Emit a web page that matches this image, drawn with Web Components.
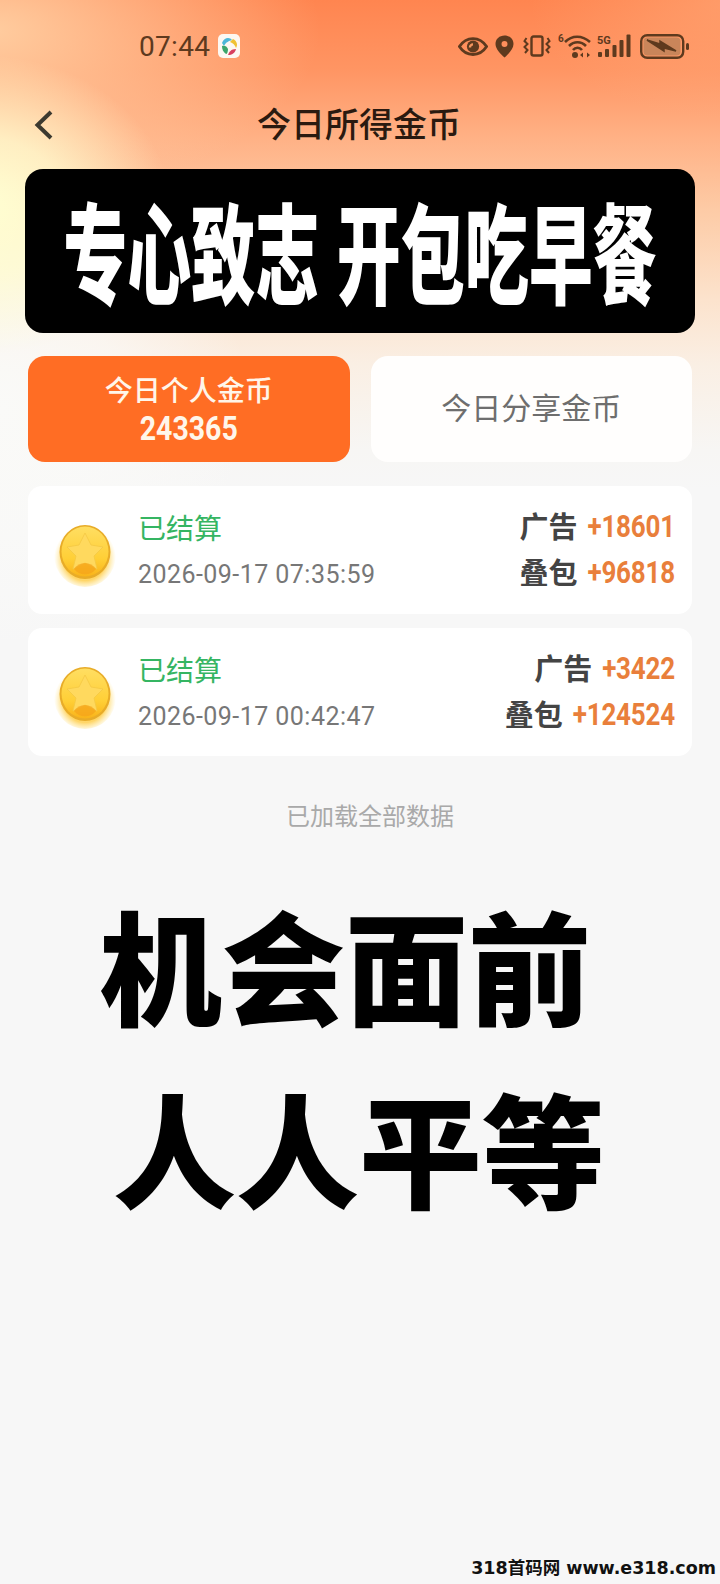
<!DOCTYPE html>
<html lang="zh">
<head>
<meta charset="utf-8">
<title>今日所得金币</title>
<style>
    html, body {
        margin: 0;
        padding: 0;
        background: #f7f7f7;
    }
</style>
</head>
<body>

<app-page>
    <status-bar time="07:44"></status-bar>
    <nav-bar>今日所得金币</nav-bar>
    <promo-banner>专心致志 开包吃早餐</promo-banner>

    <tab-row>
        <tab-item active>今日个人金币<span slot="value">243365</span></tab-item>
        <tab-item>今日分享金币</tab-item>
    </tab-row>

    <settle-card status="已结算" time="2026-09-17 07:35:59" ad="+18601" pack="+96818"></settle-card>
    <settle-card status="已结算" time="2026-09-17 00:42:47" ad="+3422" pack="+124524"></settle-card>

    <end-note>已加载全部数据</end-note>

    <big-slogan>
        <span>机会面前</span>
        <span class="second">人人平等</span>
    </big-slogan>

    <water-mark>318首码网 www.e318.com</water-mark>
</app-page>

<script>
const CJK = `"Noto Sans CJK SC", "Noto Sans", sans-serif`;
const NUM = `Roboto, "Noto Sans CJK SC", sans-serif`;

class AppPage extends HTMLElement {
    connectedCallback() {
        const shadow = this.attachShadow({ mode: "open" });

        shadow.innerHTML = `
        <style>
            :host {
                display: flex;
                flex-direction: column;
                width: 720px;
                height: 1584px;
                overflow: hidden;
                font-family: ${CJK};
                background:
                    radial-gradient(ellipse 190px 150px at -20px 205px, #ffffd2 0%, rgba(255,255,210,.75) 45%, rgba(255,255,210,0) 100%),
                    radial-gradient(ellipse 330px 170px at -10px 30px, rgba(255,216,172,.85) 0%, rgba(255,212,170,.45) 50%, rgba(255,212,170,0) 100%),
                    radial-gradient(ellipse 250px 240px at 0 410px, rgba(250,250,248,1) 0%, rgba(250,250,248,.7) 50%, rgba(250,250,248,0) 100%),
                    radial-gradient(ellipse 200px 120px at 730px 0, rgba(255,178,130,.5) 0%, rgba(255,178,130,0) 100%),
                    linear-gradient(180deg, #ff8550 0, #ff9563 70px, #ffb084 135px, #fdcba6 210px, #fce3cd 300px, #faefe4 365px, #f7f6f4 450px, #f7f7f7 490px);
            }
        </style>
        <slot></slot>`;
    }
}

customElements.define("app-page", AppPage);

class StatusBar extends HTMLElement {
    connectedCallback() {
        const shadow = this.attachShadow({ mode: "open" });

        shadow.innerHTML = `
        <style>
            :host {
                display: flex;
                align-items: center;
                height: 92px;
                padding: 0 31px 0 139px;
                box-sizing: border-box;
                color: #5e3a1e;
            }
            .time {
                font: 400 28px/1 ${NUM};
                letter-spacing: .3px;
                margin-top: 2px;
            }
            .app {
                margin-left: 8px;
            }
            .icons {
                display: flex;
                align-items: center;
                margin-left: auto;
            }
            svg {
                display: block;
            }
        </style>

        <span class="time">${this.getAttribute("time")}</span>

        <svg class="app" width="22" height="24" viewBox="0 0 22 24">
            <rect width="22" height="24" rx="5" fill="#fdf8f2"/>
            <path d="M4 9 C6 3 12 3 14 6 C11 7 8 8 6 12 Z" fill="#4db7d8"/>
            <path d="M15 5 C19 7 20 11 18 14 C17 11 15 9 12 8 Z" fill="#f0c233"/>
            <path d="M4 12 C6 11 9 12 10 15 C10 18 9 20 8 20 C5 18 4 15 4 12 Z" fill="#3da56a"/>
            <path d="M18 15 C17 19 14 21 10 21 C11 18 13 15 18 15 Z" fill="#d8405f"/>
        </svg>

        <div class="icons">
            <!-- eye -->
            <svg width="30" height="19" viewBox="0 0 32 20">
                <path d="M1.500 10 C6 3 11 1.500 16 1.500 C21 1.500 26 3 30.500 10 C26 17 21 18.500 16 18.500 C11 18.500 6 17 1.500 10 Z" fill="none" stroke="#5e3a1e" stroke-width="3"/>
                <circle cx="16" cy="10" r="6.500" fill="#5e3a1e"/>
                <path d="M11.500 11 A4.500 4.500 0 0 1 16 6.500 L16 9 A2 2 0 0 0 14 11 Z" fill="#f6965f"/>
            </svg>
            <!-- location -->
            <svg style="margin-left:7px" width="19" height="23" viewBox="0 0 19 23">
                <path fill-rule="evenodd" d="M9.500 0.500 C14.500 0.500 18.500 4 18.500 9 C18.500 14 13 19.500 9.500 22.500 C6 19.500 0.500 14 0.500 9 C0.500 4 4.500 0.500 9.500 0.500 Z M9.500 6 A3 3 0 1 0 9.500 12 A3 3 0 1 0 9.500 6 Z" fill="#5e3a1e"/>
            </svg>
            <!-- vibrate -->
            <svg style="margin-left:9px" width="28" height="22" viewBox="0 0 28 22">
                <rect x="8.500" y="1.500" width="11" height="19" rx="2" fill="none" stroke="#5e3a1e" stroke-width="2.400"/>
                <path d="M3.500 3 L1.500 6 L4.500 9 L1.500 12 L4.500 15 L2 18 M24.500 3 L26.500 6 L23.500 9 L26.500 12 L23.500 15 L26 18" fill="none" stroke="#5e3a1e" stroke-width="2"/>
            </svg>
            <!-- wifi 6 -->
            <svg style="margin-left:7px" width="34" height="26" viewBox="0 0 34 26">
                <text x="0" y="9" font-size="10" font-weight="700" font-family="Roboto" fill="#5e3a1e">6</text>
                <path d="M7 9 C14 2 24 2 32 9 M11 13 C16 8 23 8 28 13 M15 17 C17.500 14 21.500 14 24 17" fill="none" stroke="#5e3a1e" stroke-width="2.600"/>
                <circle cx="17" cy="22" r="3" fill="#5e3a1e"/>
                <path d="M22 22 L25 19.500 L25 24.500 Z M32 22 L29 19.500 L29 24.500 Z" fill="#5e3a1e"/>
            </svg>
            <!-- 5G signal -->
            <svg style="margin-left:5px" width="35" height="24" viewBox="0 0 35 24">
                <text x="0" y="10" font-size="11" font-weight="700" font-family="Roboto" fill="#5e3a1e">5G</text>
                <rect x="1" y="18" width="4" height="5" rx="1" fill="#5e3a1e"/>
                <rect x="8" y="15" width="4" height="8" rx="1" fill="#5e3a1e"/>
                <rect x="15.500" y="11" width="4" height="12" rx="1" fill="#5e3a1e"/>
                <rect x="22.500" y="6" width="4" height="17" rx="1" fill="#5e3a1e"/>
                <rect x="29.500" y="0.500" width="4" height="22.500" rx="1" fill="#5e3a1e"/>
            </svg>
            <!-- battery -->
            <svg style="margin-left:8px" width="49" height="25" viewBox="0 0 49 25">
                <rect x="1.200" y="1.200" width="42" height="22.600" rx="6" fill="none" stroke="#5e3a1e" stroke-width="2.400"/>
                <rect x="3.500" y="3.500" width="37" height="18" rx="4" fill="#c9855a"/>
                <path d="M7 6 L20 10 L20 7 L36 17 L24 14 L24 17 Z" fill="#5e3a1e" stroke="#5e3a1e" stroke-width="1.500"/>
                <rect x="46" y="9" width="3" height="7" rx="1.500" fill="#5e3a1e"/>
            </svg>
        </div>`;
    }
}

customElements.define("status-bar", StatusBar);

class NavBar extends HTMLElement {
    connectedCallback() {
        const shadow = this.attachShadow({ mode: "open" });

        shadow.innerHTML = `
        <style>
            :host {
                display: grid;
                grid-template-columns: 1fr auto 1fr;
                align-items: center;
                height: 66px;
                padding: 0 33px;
                box-sizing: border-box;
                color: #2a1a10;
            }
            .title {
                font: 500 34px/1 ${CJK};
                margin: -4px 0 0 -2px;
            }
            svg {
                display: block;
            }
        </style>

        <svg width="22" height="32" viewBox="0 0 22 32">
            <path d="M18 3 L4.500 16 L18 29" fill="none" stroke="#3c3a30" stroke-width="4"/>
        </svg>
        <span class="title"><slot></slot></span>
        <span></span>`;
    }
}

customElements.define("nav-bar", NavBar);

class PromoBanner extends HTMLElement {
    connectedCallback() {
        const shadow = this.attachShadow({ mode: "open" });

        shadow.innerHTML = `
        <style>
            :host {
                display: flex;
                align-items: center;
                justify-content: center;
                height: 164px;
                margin: 11px 25px 0;
                border-radius: 18px;
                background: #000;
                color: #fff;
                overflow: hidden;
            }
            .text {
                display: block;
                font: 900 64px/1 ${CJK};
                word-spacing: 3px;
                white-space: nowrap;
                transform: translateY(-3px) scaleY(1.7);
            }
        </style>

        <span class="text"><slot></slot></span>`;
    }
}

customElements.define("promo-banner", PromoBanner);

class TabRow extends HTMLElement {
    connectedCallback() {
        const shadow = this.attachShadow({ mode: "open" });

        shadow.innerHTML = `
        <style>
            :host {
                display: grid;
                grid-template-columns: 1fr 1fr;
                gap: 21px;
                margin: 23px 28px 10px;
            }
        </style>
        <slot></slot>`;
    }
}

customElements.define("tab-row", TabRow);

class TabItem extends HTMLElement {
    connectedCallback() {
        const shadow = this.attachShadow({ mode: "open" });

        shadow.innerHTML = `
        <style>
            :host {
                display: flex;
                flex-direction: column;
                align-items: center;
                justify-content: center;
                height: 106px;
                padding-bottom: 6px;
                box-sizing: border-box;
                border-radius: 17px;
                background: #fffefd;
                color: #6e6e6e;
                font: 400 30px/1.2 ${CJK};
            }
            :host([active]) {
                padding-bottom: 0;
                background: #ff6d24;
                color: #fff6ea;
                font-size: 28px;
                font-weight: 500;
            }
            ::slotted([slot="value"]) {
                display: block;
                font: 700 28.500px/1 ${NUM};
                transform: scaleY(1.14);
                margin-top: 9px;
            }
        </style>
        <div><slot></slot></div>
        <slot name="value"></slot>`;
    }
}

customElements.define("tab-item", TabItem);

class CoinIcon extends HTMLElement {
    connectedCallback() {
        const shadow = this.attachShadow({ mode: "open" });

        shadow.innerHTML = `
        <style>
            :host {
                display: block;
                width: 64px;
                height: 68px;
                margin-top: 6px;
            }
            svg {
                display: block;
            }
        </style>
        <svg width="64" height="68" viewBox="0 0 64 68">
            <defs>
                <radialGradient id="glow" cx=".5" cy=".55" r=".5">
                    <stop offset=".7" stop-color="#ffc428" stop-opacity=".7"/>
                    <stop offset="1" stop-color="#ffe27a" stop-opacity="0"/>
                </radialGradient>
                <linearGradient id="face" x1="0" y1="0" x2="0" y2="1">
                    <stop offset="0" stop-color="#ffde62"/>
                    <stop offset=".65" stop-color="#ffcf36"/>
                    <stop offset="1" stop-color="#f9b31a"/>
                </linearGradient>
            </defs>
            <ellipse cx="32" cy="36" rx="31" ry="32" fill="url(#glow)"/>
            <ellipse cx="32" cy="33" rx="25.500" ry="27" fill="#e8ac28"/>
            <ellipse cx="32" cy="32.500" rx="23.500" ry="25" fill="url(#face)"/>
            <path d="M32 14 L38 26 L50 28 L41 37 L44 50 L32 44 L20 50 L23 37 L14 28 L26 26 Z" fill="#ffd95e" stroke="#f4c844" stroke-width=".8"/>
            <path d="M21 50 C26 42 38 42 43 50 C38 57 26 57 21 50 Z" fill="#f5a21a" opacity=".7"/>
        </svg>`;
    }
}

customElements.define("coin-icon", CoinIcon);

class SettleCard extends HTMLElement {
    connectedCallback() {
        const shadow = this.attachShadow({ mode: "open" });

        shadow.innerHTML = `
        <style>
            :host {
                display: flex;
                align-items: center;
                height: 128px;
                margin: 14px 28px 0;
                padding: 0 17px 0 25px;
                box-sizing: border-box;
                border-radius: 14px;
                background: #fff;
            }
            .info {
                display: flex;
                flex-direction: column;
                gap: 21px;
                margin-left: 21px;
            }
            .status {
                font: 400 28px/1 ${CJK};
                color: #35b562;
            }
            .time {
                font: 400 25px/1 ${NUM};
                color: #777;
                letter-spacing: .45px;
            }
            .amounts {
                display: flex;
                flex-direction: column;
                align-items: flex-end;
                gap: 14px;
                margin: -3px 0 0 auto;
            }
            .row {
                display: flex;
                align-items: center;
                gap: 10px;
                height: 32px;
            }
            .label {
                font: 700 29px/1 ${CJK};
                color: #444;
            }
            .val {
                font: 700 26px/1 ${NUM};
                color: #e97f3b;
                letter-spacing: -.2px;
                transform: scaleY(1.2);
            }
        </style>

        <coin-icon></coin-icon>

        <div class="info">
            <span class="status">${this.getAttribute("status")}</span>
            <span class="time">${this.getAttribute("time")}</span>
        </div>

        <div class="amounts">
            <div class="row"><span class="label">广告</span><span class="val">${this.getAttribute("ad")}</span></div>
            <div class="row"><span class="label">叠包</span><span class="val">${this.getAttribute("pack")}</span></div>
        </div>`;
    }
}

customElements.define("settle-card", SettleCard);

class EndNote extends HTMLElement {
    connectedCallback() {
        const shadow = this.attachShadow({ mode: "open" });

        shadow.innerHTML = `
        <style>
            :host {
                display: block;
                margin-top: 45px;
                padding-left: 20px;
                text-align: center;
                font: 400 24px/28px ${CJK};
                color: #a9a9a9;
            }
        </style>
        <slot></slot>`;
    }
}

customElements.define("end-note", EndNote);

class BigSlogan extends HTMLElement {
    connectedCallback() {
        const shadow = this.attachShadow({ mode: "open" });

        shadow.innerHTML = `
        <style>
            :host {
                display: flex;
                flex-direction: column;
                gap: 43px;
                margin-top: 63px;
                padding-left: 99px;
                color: #000;
                font: 900 123px/140px ${CJK};
            }
            ::slotted(.second) {
                margin-left: 14px;
            }
        </style>
        <slot></slot>`;
    }
}

customElements.define("big-slogan", BigSlogan);

class WaterMark extends HTMLElement {
    connectedCallback() {
        const shadow = this.attachShadow({ mode: "open" });

        shadow.innerHTML = `
        <style>
            :host {
                display: block;
                margin-top: auto;
                padding: 0 4px 5px 0;
                text-align: right;
                color: #111;
                font: 700 17.500px/22px "DejaVu Sans", "Noto Sans CJK SC", sans-serif;
                white-space: nowrap;
            }
        </style>
        <slot></slot>`;
    }
}

customElements.define("water-mark", WaterMark);
</script>
</body>
</html>
